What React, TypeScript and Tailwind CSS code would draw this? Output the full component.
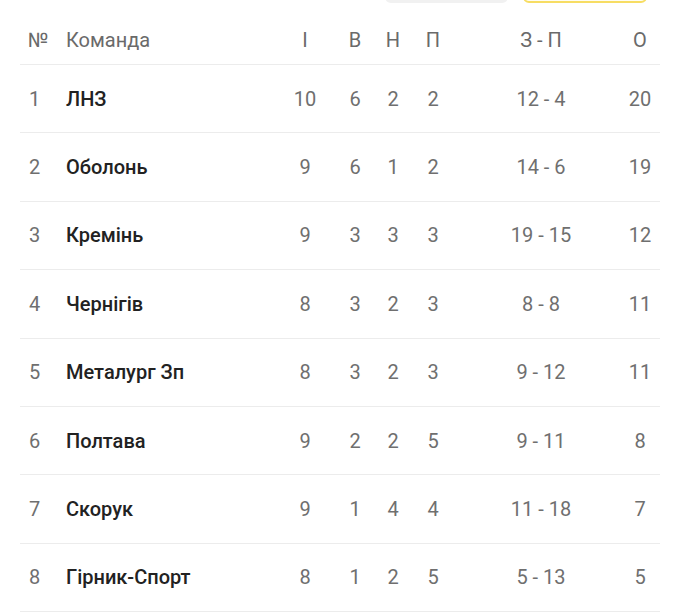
const rows = [
  { pos: 1, team: "ЛНЗ", games: 10, w: 6, d: 2, l: 2, goals: "12 - 4", pts: 20 },
  { pos: 2, team: "Оболонь", games: 9, w: 6, d: 1, l: 2, goals: "14 - 6", pts: 19 },
  { pos: 3, team: "Кремінь", games: 9, w: 3, d: 3, l: 3, goals: "19 - 15", pts: 12 },
  { pos: 4, team: "Чернігів", games: 8, w: 3, d: 2, l: 3, goals: "8 - 8", pts: 11 },
  { pos: 5, team: "Металург Зп", games: 8, w: 3, d: 2, l: 3, goals: "9 - 12", pts: 11 },
  { pos: 6, team: "Полтава", games: 9, w: 2, d: 2, l: 5, goals: "9 - 11", pts: 8 },
  { pos: 7, team: "Скорук", games: 9, w: 1, d: 4, l: 4, goals: "11 - 18", pts: 7 },
  { pos: 8, team: "Гірник-Спорт", games: 8, w: 1, d: 2, l: 5, goals: "5 - 13", pts: 5 },
];

function StatCells(props: any) {
  return (
    <>
      <div className="w-[36px] text-center">{props.games}</div>
      <div className="ml-[14px] w-[36px] text-center">{props.w}</div>
      <div className="ml-[2px] w-[36px] text-center">{props.d}</div>
      <div className="ml-[4px] w-[36px] text-center">{props.l}</div>
      <div className="ml-[50px] w-[80px] text-center">{props.goals}</div>
      <div className="ml-[41px] w-[36px] text-center">{props.pts}</div>
    </>
  );
}

export default function App() {
  return (
    <div className="min-h-[616px] w-[680px] overflow-hidden bg-white font-['Roboto',sans-serif] text-[20px]">
      {/* tabs cut off at the top */}
      <div className="-mt-[30px] flex h-[33px] pl-[385px]">
        <div className="w-[123px] rounded-md bg-[#f1f1f1]" />
        <div className="ml-[15px] w-[124px] rounded-md border-2 border-[#f7dd63] bg-[#fffdf3]" />
      </div>

      <div className="px-[20px]">
        {/* header */}
        <div className="flex h-[62px] items-center border-b border-[#ececec] pt-[12px] pr-[2px] text-[#6a6a6a]">
          <div className="w-[46px] pl-[8px]">№</div>
          <div className="flex-1">Команда</div>
          <StatCells games="І" w="В" d="Н" l="П" goals="З - П" pts="О" />
        </div>

        {rows.map((r) => (
          <div
            key={r.pos}
            className="flex h-[68.4px] items-center border-b border-[#ececec] pr-[2px] text-[#6f6f6f]"
          >
            <div className="w-[46px] pl-[9px]">{r.pos}</div>
            <div className="flex-1 font-medium text-[#222]">{r.team}</div>
            <StatCells {...r} />
          </div>
        ))}
      </div>
    </div>
  );
}
